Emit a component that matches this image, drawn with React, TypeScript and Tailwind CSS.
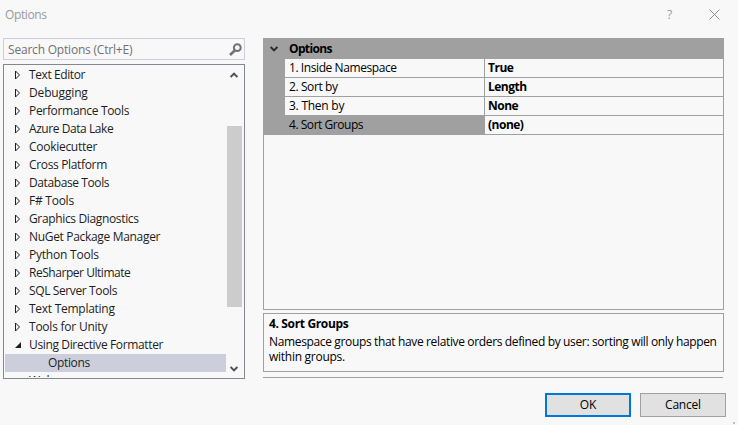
const items: [string, string][] = [
  ['Text Editor', 'tracking-[-0.4px]'],
  ['Debugging', 'tracking-[-0.15px]'],
  ['Performance Tools', 'tracking-[-0.32px]'],
  ['Azure Data Lake', 'tracking-[-0.43px]'],
  ['Cookiecutter', 'tracking-[-0.28px]'],
  ['Cross Platform', 'tracking-[-0.34px]'],
  ['Database Tools', 'tracking-[-0.4px]'],
  ['F# Tools', 'tracking-[-0.25px]'],
  ['Graphics Diagnostics', 'tracking-[-0.35px]'],
  ['NuGet Package Manager', 'tracking-[-0.32px]'],
  ['Python Tools', 'tracking-[-0.22px]'],
  ['ReSharper Ultimate', 'tracking-[-0.46px]'],
  ['SQL Server Tools', 'tracking-[-0.38px]'],
  ['Text Templating', 'tracking-[-0.27px]'],
  ['Tools for Unity', 'tracking-[-0.23px]'],
];

const rows: [string, string, string][] = [
  ['1. Inside Namespace', 'True', 'tracking-[-0.42px]'],
  ['2. Sort by', 'Length', 'tracking-[-0.4px]'],
  ['3. Then by', 'None', 'tracking-[-0.25px]'],
  ['4. Sort Groups', '(none)', 'tracking-[-0.46px]'],
];

function Chevron({ up = false, className = '' }: { up?: boolean; className?: string }) {
  return (
    <svg width="8" height="6" viewBox="0 0 8 6" className={className} fill="none" stroke="currentColor" strokeWidth="2">
      <path d={up ? 'M0.6 5 4 1.6 7.4 5' : 'M0.6 1 4 4.4 7.4 1'} />
    </svg>
  );
}

function TreeItem({ label, track, open = false }: { label: string; track: string; open?: boolean }) {
  return (
    <div className="flex h-[18px] shrink-0 items-center pl-[10px]">
      <svg width="7" height="10" viewBox="0 0 7 10" className="mr-[7px] shrink-0">
        {open ? (
          <path d="M6 2v6H0z" fill="#1e1e1e" />
        ) : (
          <path d="M.5 1v8l4-4z" fill="none" stroke="#1e1e1e" strokeWidth="1" />
        )}
      </svg>
      <span className={track}>{label}</span>
    </div>
  );
}

export default function App() {
  return (
    <div className="flex h-[425px] w-[738px] flex-col overflow-hidden whitespace-nowrap bg-[#f8f8f8] font-['Open_Sans','Noto_Sans',sans-serif] text-[12px] leading-[18px] tracking-[-0.2px] text-[#1e1e1e]">
      <header className="flex h-[38px] shrink-0 items-start pt-[6px] pl-[5px] text-[#999999]">
        <span className="tracking-[-0.4px]">Options</span>
        <span className="ml-auto">?</span>
        <svg width="11" height="11" viewBox="0 0 11 11" className="mt-[3px] mr-[18px] ml-[37px]" stroke="#8f8f8f" strokeWidth="1" fill="none">
          <path d="M.5.5l10 10M10.500.5l-10 10" />
        </svg>
      </header>
      <main className="flex h-[341px] shrink-0 pl-[3px]">
        <section className="flex w-[242px] flex-col">
          <div className="flex h-[22px] items-center border border-[#cccedb] pr-[2px] pl-[4px] text-[#717171]">
            <span className="pt-px">Search Options (Ctrl+E)</span>
            <svg width="13" height="13" viewBox="0 0 13 13" className="ml-auto" fill="none" stroke="#717171">
              <circle cx="8.300" cy="4.700" r="3.400" strokeWidth="2" />
              <path d="M6 7.200 1 12" strokeWidth="2.600" />
            </svg>
          </div>
          <div className="mt-[4px] flex h-[315px] border border-[#828790]">
            <div className="flex flex-1 flex-col overflow-hidden pt-px pl-px">
              {items.map(([label, track]) => (
                <TreeItem key={label} label={label} track={track} />
              ))}
              <TreeItem label="Using Directive Formatter" track="tracking-[-0.36px]" open />
              <div className="h-[18px] shrink-0 bg-[#cccedb] pl-[43px] tracking-[-0.35px]">Options</div>
              <div className="h-[5px] shrink-0 overflow-hidden pl-[24px]">Web</div>
            </div>
            <div className="flex w-[18px] flex-col pr-[2px] pl-px text-[#505050]">
              <Chevron up className="mt-[7px] ml-[3px]" />
              <div className="mt-[48px] h-[181px] w-[15px] bg-[#cccccc]" />
              <Chevron className="mt-auto mb-[6px] ml-[3px]" />
            </div>
          </div>
        </section>
        <section className="ml-[18px] flex w-[461px] flex-col text-black">
          <div className="flex h-[272px] flex-col border border-[#a0a0a0]">
            <div className="flex h-[20px] shrink-0 items-center bg-[#a0a0a0] pl-[6px] font-bold">
              <Chevron className="mr-[11px] text-[#2b2b2b]" />
              <span className="tracking-[-0.65px]">Options</span>
            </div>
            <div className="flex">
              <div className="w-[21px] bg-[#a0a0a0]" />
              <div className="flex-1">
                {rows.map(([k, v, track], i) => (
                  <div key={k} className="flex h-[19px] border-b border-[#a0a0a0]">
                    <div className={'w-[200px] border-r border-[#a0a0a0] pl-[4px] ' + track + (i === 3 ? ' bg-[#a0a0a0]' : '')}>{k}</div>
                    <div className="pl-[3px] font-bold tracking-[-0.5px]">{v}</div>
                  </div>
                ))}
              </div>
            </div>
          </div>
          <div className="mt-[3px] h-[59px] border border-[#a0a0a0] pt-px pl-[5px]">
            <div className="h-[19px] font-bold tracking-[-0.35px]">4. Sort Groups</div>
            <div className="leading-[15px]">
              <div className="tracking-[-0.355px]">Namespace groups that have relative orders defined by user: sorting will only happen</div>
              <div className="tracking-[-0.27px]">within groups.</div>
            </div>
          </div>
          <div className="mt-[5px] mr-px h-px bg-[#a0a0a0]" />
        </section>
      </main>
      <footer className="mt-[14px] flex shrink-0 justify-end gap-[9px] pr-[12px] text-black">
        <button className="h-[24px] w-[86px] border-2 border-[#0078d7] bg-[#e1e1e1] leading-[20px]">OK</button>
        <button className="h-[24px] w-[86px] border border-[#a0a0a0] bg-[#e1e1e1] leading-[22px]">Cancel</button>
      </footer>
      <div className="mt-[5px] mr-[3px] size-[2px] shrink-0 self-end bg-[#bfbfbf]" />
    </div>
  );
}
